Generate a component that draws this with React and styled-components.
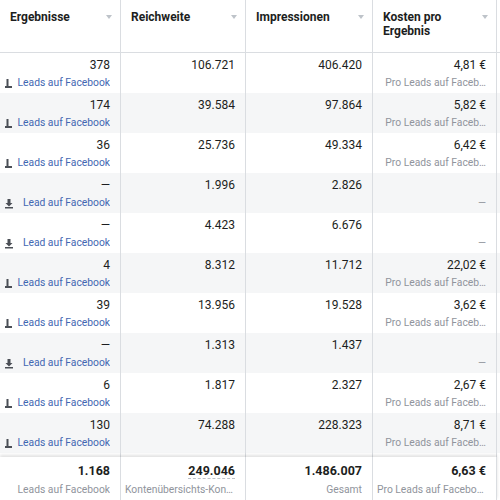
import React from 'react';
import styled, { createGlobalStyle } from 'styled-components';

const Global = createGlobalStyle`
  body { margin: 0; font-family: Roboto, "Liberation Sans", sans-serif; background: #fff; }
`;

const Table = styled.div`
  width: 500px;
  height: 500px;
  overflow: hidden;
  display: flex;
  flex-direction: column;
  position: relative;
  color: #1c1e21;
`;

const Grid = styled.div`
  display: grid;
  grid-template-columns: 121px 125px 127px 124px;
`;

const Head = styled(Grid)`
  height: 52px;
  border-bottom: 1px solid #dadde1;
  box-shadow: 0 1px 2px rgba(0,0,0,0.08);
`;

const HeadCell = styled.div`
  display: flex;
  justify-content: space-between;
  padding: 10px 8px 0 10px;
  border-right: 1px solid #dadde1;
  font-weight: 700;
  font-size: 12px;
  line-height: 14px;
`;

const Caret = styled.span`
  width: 0; height: 0;
  margin-top: 5px;
  border-left: 3px solid transparent;
  border-right: 3px solid transparent;
  border-top: 4px solid #bec3c9;
`;

const Row = styled(Grid)`
  height: 40px;
  background: ${p => (p.$alt ? '#f5f6f7' : '#fff')};
`;

const Cell = styled.div`
  border-right: 1px solid #dadde1;
  padding: 3px 10px 0 4px;
  text-align: right;
  font-size: 12px;
  line-height: 18px;
  min-width: 0;
`;

const Sub = styled.div`
  display: flex;
  align-items: center;
  justify-content: ${p => (p.$link ? 'space-between' : 'flex-end')};
  color: ${p => (p.$link ? '#4267b2' : '#90949c')};
  font-size: 10.3px;
  font-weight: 400;
  white-space: nowrap;
  overflow: hidden;
`;

const Clip = styled.span`
  overflow: hidden;
  text-overflow: ellipsis;
`;

const Foot = styled(Grid)`
  position: absolute;
  left: 0; bottom: 0;
  height: 43px;
  background: #fff;
  box-shadow: 0 -2px 3px rgba(0,0,0,0.12);
`;

const FootCell = styled(Cell)`
  padding-top: 4px;
  font-weight: 700;
  font-size: 12.5px;
  line-height: 19px;
`;

const Underlined = styled.span`
  border-bottom: 1px dashed #bec3c9;
`;

const Icon = ({ dl }) => (
  <svg width="10" height="11" viewBox="0 0 10 11">
    {dl ? (
      <>
        <path d="M3.5 1h3v4h2L5 8.5 1.5 5h2z" fill="#4b4f56" />
        <rect x="1" y="9" width="8" height="1.5" fill="#4b4f56" />
      </>
    ) : (
      <>
        <rect x="2.5" y="1" width="2" height="7" fill="#4b4f56" />
        <rect x="1" y="8" width="7" height="2" fill="#4b4f56" />
      </>
    )}
  </svg>
);

const rows = [
  ['378', '106.721', '406.420', '4,81 €'],
  ['174', '39.584', '97.864', '5,82 €'],
  ['36', '25.736', '49.334', '6,42 €'],
  [null, '1.996', '2.826', null],
  [null, '4.423', '6.676', null],
  ['4', '8.312', '11.712', '22,02 €'],
  ['39', '13.956', '19.528', '3,62 €'],
  [null, '1.313', '1.437', null],
  ['6', '1.817', '2.327', '2,67 €'],
  ['130', '74.288', '228.323', '8,71 €'],
  ['401', '147.221', '659.560', '9,01 €'],
];

export default function App() {
  return (
    <Table>
      <Global />
      <Head>
        <HeadCell>Ergebnisse<Caret /></HeadCell>
        <HeadCell>Reichweite<Caret /></HeadCell>
        <HeadCell>Impressionen<Caret /></HeadCell>
        <HeadCell>Kosten pro<br />Ergebnis<Caret /></HeadCell>
      </Head>
      {rows.map((r, i) => {
        const single = r[0] === null;
        return (
          <Row key={i} $alt={i % 2 === 1}>
            <Cell>
              <div>{single ? '—' : r[0]}</div>
              <Sub $link>
                <Icon dl={single} />
                {single ? 'Lead auf Facebook' : 'Leads auf Facebook'}
              </Sub>
            </Cell>
            <Cell>{r[1]}</Cell>
            <Cell>{r[2]}</Cell>
            <Cell>
              <div>{single ? '\u00a0' : r[3]}</div>
              <Sub>{single ? '—' : 'Pro Leads auf Faceb…'}</Sub>
            </Cell>
          </Row>
        );
      })}
      <Foot>
        <FootCell>1.168<Sub>Leads auf Facebook</Sub></FootCell>
        <FootCell><Underlined>249.046</Underlined><Sub><Clip>Kontenübersichts-Kont…</Clip></Sub></FootCell>
        <FootCell>1.486.007<Sub>Gesamt</Sub></FootCell>
        <FootCell>6,63 €<Sub><Clip>Pro Leads auf Facebook</Clip></Sub></FootCell>
      </Foot>
    </Table>
  );
}
